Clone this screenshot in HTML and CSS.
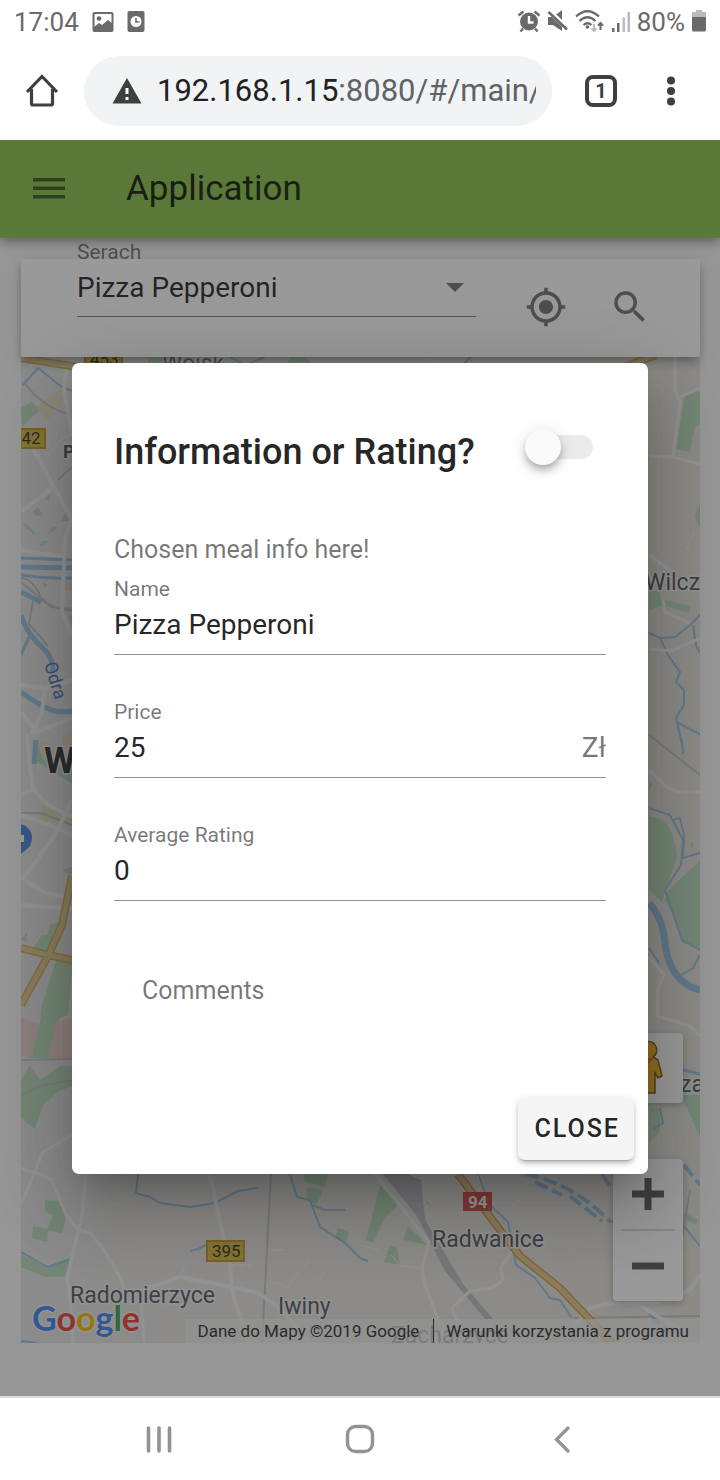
FILE: index.html
```html
<!DOCTYPE html>
<html lang="en">
<head>
<meta charset="utf-8">
<meta name="viewport" content="width=device-width, initial-scale=1">
<title>Application</title>
<link rel="stylesheet" href="styles.css">
</head>
<body>
<header class="status">
  <div class="status-group status-left">
    <span>17:04</span>
    <svg width="22" height="22" viewBox="0 0 22 22"><rect x="1.500" y="2" width="19" height="18" rx="1" fill="none" stroke="currentColor" stroke-width="2"/><circle cx="7" cy="7.500" r="2.300" fill="currentColor"/><path fill="currentColor" d="M2 16l5-4 3 2 6-5 5 4v7H2z"/></svg>
    <svg width="18" height="22" viewBox="0 0 18 22"><rect x=".5" y="0" width="17" height="21" rx="2" fill="currentColor"/><circle cx="9" cy="10.500" r="5.500" fill="#fff"/><path d="M9 7v4h3.500" fill="none" stroke="currentColor" stroke-width="1.600"/></svg>
  </div>
  <div class="status-group">
    <svg width="24" height="24" viewBox="0 0 24 24"><g fill="none" stroke="currentColor" stroke-width="2.400"><path d="M1.500 5.500l5-4M17.500 1.500l5 4M6 18.500l-2.500 3M18 18.500l2.500 3"/></g><circle cx="12" cy="11.500" r="9" fill="currentColor"/><path d="M12 6v6.500h4.500" fill="none" stroke="#fff" stroke-width="2.400"/></svg>
    <svg width="22" height="24" viewBox="0 0 22 24"><path fill="currentColor" d="M1 7h5l9-7v21L6 15H1z"/><path d="M1 0l20 19" stroke="#fff" stroke-width="5"/><path d="M1.500 2l18.500 17.500" stroke="currentColor" stroke-width="2.600"/></svg>
    <svg width="30" height="24" viewBox="0 0 30 24"><g fill="none" stroke="currentColor" stroke-width="2.300"><path d="M1 6.500q11.500-10.500 23 0M4.500 11q8-7.500 16 0M8.500 15q4-3.500 8 0"/></g><circle cx="12.500" cy="17" r="1.800" fill="currentColor"/><path d="M19 14v7m-2.500-2.500l2.500 2.500 2.500-2.500" fill="none" stroke="#bbb" stroke-width="2"/><path d="M25.500 20v-7m-2.500 2.500l2.500-2.500 2.500 2.500" fill="none" stroke="currentColor" stroke-width="2"/></svg>
    <svg width="20" height="24" viewBox="0 0 20 24"><g fill="currentColor"><path d="M1 18h2.500v4H1zM6 13h2.500v9H6z"/><path fill="#bbb" d="M11.500 7.500H14V22h-2.500zM16.500 2H19v20h-2.500z"/></g></svg>
    <span>80%</span>
    <svg width="16" height="24" viewBox="0 0 16 24"><path fill="#bbb" d="M5 0h6v2h4v6H1V2h4z"/><path fill="currentColor" d="M1 7h14v13q0 1.500-1.500 1.500h-11Q1 21.500 1 20z"/></svg>
  </div>
</header>

<div class="browser">
  <button class="bare home" aria-label="Home"><svg width="34" height="34" viewBox="0 0 34 34"><path d="M2 18L17 2.500 32 18M6.500 15v14.500q0 1.500 1.500 1.500h18q1.500 0 1.500-1.500V15" fill="none" stroke="#3c4043" stroke-width="3.200"/></svg></button>
  <div class="omnibox">
    <svg width="30" height="28" viewBox="0 0 30 28"><path fill="#3c4043" d="M15 1l14.500 25.500H.5z"/><path fill="#fff" d="M13.500 11h3v6h-3zM13.500 20h3v3h-3z"/></svg>
    <span class="url"><b>192.168.1.15</b>:8080/#/main/</span>
  </div>
  <button class="bare tabs" aria-label="Open tabs"><span class="tab-count">1</span></button>
  <button class="bare more" aria-label="More options"><svg width="10" height="32" viewBox="0 0 10 32"><g fill="#3c4043"><circle cx="5" cy="5.500" r="4"/><circle cx="5" cy="16" r="4"/><circle cx="5" cy="26.500" r="4"/></g></svg></button>
</div>

<div class="page">
  <header class="toolbar">
    <button class="bare menu" aria-label="Menu"><svg width="32" height="22" viewBox="0 0 32 22"><path fill="currentColor" d="M0 0h32v3.500H0zM0 8.500h32V12H0zM0 17h32v3.500H0z"/></svg></button>
    <h1 class="app-title">Application</h1>
  </header>

  <main class="content">
    <form class="search-card">
      <div class="search-field">
        <label class="label" for="meal">Serach</label>
        <select class="select" id="meal"><option>Pizza Pepperoni</option></select>
        <svg class="caret" width="18" height="9" viewBox="0 0 18 9"><path fill="currentColor" d="M0 0h18L9 9z"/></svg>
      </div>
      <button type="button" class="bare tool" aria-label="My location"><svg width="42" height="42" viewBox="0 0 24 24"><path fill="currentColor" d="M12 8c-2.210 0-4 1.790-4 4s1.790 4 4 4 4-1.790 4-4-1.790-4-4-4zm8.940 3A8.994 8.994 0 0 0 13 3.060V1h-2v2.060A8.994 8.994 0 0 0 3.060 11H1v2h2.060A8.994 8.994 0 0 0 11 20.940V23h2v-2.060A8.994 8.994 0 0 0 20.940 13H23v-2h-2.060zM12 19c-3.870 0-7-3.130-7-7s3.130-7 7-7 7 3.130 7 7-3.130 7-7 7z"/></svg></button>
      <button type="button" class="bare tool" aria-label="Search"><svg width="42" height="42" viewBox="0 0 24 24"><path fill="currentColor" d="M15.500 14h-.79l-.28-.27A6.471 6.471 0 0 0 16 9.500 6.500 6.500 0 1 0 9.500 16c1.610 0 3.090-.59 4.230-1.570l.27.28v.79l5 4.990L20.490 19l-4.990-5zm-6 0C7.010 14 5 11.990 5 9.500S7.010 5 9.500 5 14 7.010 14 9.500 11.990 14 9.500 14z"/></svg></button>
    </form>

    <section class="map" aria-label="Map">
      <svg class="map-art" viewBox="21 357 679 986" preserveAspectRatio="xMidYMid slice">
        <defs><linearGradient id="land"><stop offset="0" stop-color="#e6e6e6"/><stop offset=".35" stop-color="#e8e6e1"/><stop offset="1" stop-color="#e8e4dd"/></linearGradient></defs>
        <rect x="21" y="357" width="679" height="986" fill="url(#land)"/>
        <g fill="#b9dcbc">
          <path d="M21 408l11-6 8 8-18 17zM33 511l5-4 4 8-6 1zM24 522l12 11-2 2-11-10zM44 500l6-6 0 6zM48 534l5-8 5 2zM60 522l6-10 6 4-3 5zM38 548l6-8 4 2zM42 582l6 3-4 3zM68 615l4 1v10z"/>
          <path d="M33 740l17 4 22 26v14l-38-24zM62 870l10-3v8zM21 940l6-8 0 9zM32 950l10-15 5 0 3-10 16-5-6 22-12 8zM56 960l16-2v12l-4 45-8 3-10 40H30l10-35 2-18zM21 1080l9-15 10 15 20-14 12 0v20l-14 6-15 13-8 24-14-11z"/>
          <path d="M45 1200l14 1 7 16-4 16-14-2-1 11-15-4 1-12 14 3 6-14-8-3zM21 1254l27 14 22-9-5 18H45l-24-10zM303 1174h25l-3 13-20-5zM307 1187l16 3-7 15-10-5zM338 1228l11 4-3 11-11-5zM148 357h20l-5 8h-15zM290 357h15l10 9h-30z"/>
          <path d="M380 1185l18 20-13 13-12 25-7-3zM408 1226l19 19-24-5zM390 1245l7 3 3 17-16-3zM426 1200l6 6-6-2zM700 392l-7-2-9 8-8 51 14 3 5-26 5-2zM700 503l-5 12 3 10 2 2zM649 590l11 2 2 14-13 4zM665 600l26 6-2 7-24-7zM649 817q24-2 28 40l-15 45-13-12zM700 861l-32 29-3 10 10 20 7 22 18 8zM681 1095h19v42zM649 1108h11v23l-11 12zM684 1212l14 8-2 5-13-7zM649 780l4 4-4 5zM690 845l3-4v8z"/>
        </g>
        <g fill="#e8dfc4"><path d="M36 407l26-19v14l-14 19zM44 804l28 13v8l-34-4zM36 740l16 4 20 12v16l-30-14zM60 738l12-8v26z"/></g>
        <g fill="#ebcfcc"><path d="M21 1017l19 7-8 34-11-3zM56 1022l16-4v40H48zM63 582h9v8h-9z"/></g>
        <path fill="#bdc1c8" d="M383 1174h24l14 6 4 40 38 64 30 35h-8l-40-48-28-55z"/>
        <g fill="none" stroke="#c3c4c8" stroke-width="2">
          <path d="M25 384q20 25 45 30M58 480l14-13M21 578q12 0 20 20 10 10 31 13M21 582l30 25 21 2M33 600l-4 24 19 22M21 813h20l31 12M21 1060l51-1M21 1096l19-10 32-6M271 1174l-9 169M649 735l51 40M690 1190l-15 90M574 1318l126-2"/>
        </g>
        <g fill="none" stroke="#98c4e4" stroke-linejoin="round">
          <path stroke-width="2" d="M23 385l15-17 24 19 10 4M21 1252l27 15 22-8M138 1174l-2 19 14 4 10 6 30 4 25-4 23-12 20-3M190 1251l8-2 8-4M290 1174l7 23 13 3 10 27 25 16 15 15M312 1205l13 5h20M230 357l15 8 20-8M470 357l-8 9M21 1341l16 2"/>
          <path stroke-width="2" d="M478 1174l12 31 18 17 8 43 19 13 15 20 10 2 12 18M608 1222l12-2M683 1225l17 21M649 633l11 5 15-1 15-12 10-10M660 638l8 17 12 17-4 10 8 8v15l-8 13 4 17 3 15M676 722l24 12M693 625l3 20 4 8M682 740l1 14M649 808l21 7 13 25-2 25-16 25 7 20 10 30 18 10M673 820l7-2 4 17-1 23 17-5M681 975l12-7 7-13M649 948l10 15M660 1108l3 15-10 6M360 1258l8 3"/>
          <path stroke-width="3" d="M21 558l51 2M21 575q25 4 51 3M21 655l8-18M683 1070l17 4"/>
          <path stroke-width="5" d="M21 567l51 1M21 592l20 10M21 615q6 20 24 35 8 8 8 22M21 692q16 12 30 18 10 3 21 1M36 740l-2 24"/>
          <path stroke-width="7" d="M649 903q14 15 16 40 5 40 35 47"/>
          <path stroke-width="4" stroke-dasharray="14 5" d="M525 1174q50 10 85 48M535 1182l27 13M570 1196l32 25M602 1174l8 12M650 1313l18 20M684 1165l16 20"/>
        </g>
        <g fill="none" stroke="#f3f3f3" stroke-linejoin="round" stroke-width="4">
          <path d="M67 366l-3 24 8 45M34 450l20 37 18 33M21 512l33-25M72 518l-7 22-3 72 10 24M21 550l17 3 24 3M21 685l24 3 27-8M45 688l-3 24-10 22M21 712l16 20 35-14M27 735l3 35 4 20-13 4M34 790l14 15 24 12M21 815l29 10 22 10M72 800l-17 35-33 45M25 880l20 13 22 4M21 905l51 4"/>
          <path stroke-width="3" d="M72 1135l-29 17-22 53M21 1168l15 5 15 6 15 36 13 15 11 3 13 15 17 29 4 13M86 1174l-4 41-15 63 3 22 3 43M141 1295l3 48"/>
          <path d="M210 1174l8 39 12 52 2 22 4 18 14 38M143 1290l37-13 52 10 26 6 22 15 30 35"/>
          <path stroke-width="3" d="M375 1174l54 68-7 26 3 17 15 40M512 1250l-11 18 2 12-11 8-22 3-18 17 6 17M675 357v33l5 13-7 53M649 456l23 1 28 7M680 397l20-9M649 649l23 2 28-13M649 555l21 15M663 600l2 12 25 11M649 770l19 18 10 4h22M649 957l15 18-6 15-1 26 33 10 10 10"/>
          <path d="M574 1326l16-18 15-4 55-2 30-12 10-15M640 1305l20 13 20 10"/>
          <path stroke-width="1" d="M48 455l15-17 9-3M232 1265h20M242 1265v5M180 1277l5-12M268 1250h16M274 1282l14 5 10-15M304 1267l5-8M319 1280l6-10M360 1245l20 5M391 1255l10 11 20 2M420 357l30 9M480 1174l-10 20 15 0M520 1200l-20 15M686 550l8-18M200 357l40 9M543 357l10 9"/>
        </g>
        <g fill="none" stroke-linejoin="round">
          <path stroke="#d3a050" stroke-width="8" d="M458 1174l42 56 20 26 40 32 52 55"/>
          <path stroke="#e6cc8c" stroke-width="5" d="M458 1174l42 56 20 26 40 32 52 55"/>
          <path stroke="#d3ae60" stroke-width="8" d="M21 358l50 8 14 2M72 876l-10 49-14 31-27 49M21 948l27 7 24 5M622 368l34-13"/>
          <path stroke="#e0cd8e" stroke-width="5" d="M21 358l50 8 14 2M72 876l-10 49-14 31-27 49M21 948l27 7 24 5M622 368l34-13"/>
        </g>
        <circle cx="18" cy="838" r="14" fill="#4a87e0"/><path fill="#4a87e0" d="M21 854l10-9H18z"/><path fill="#fff" d="M18 838h3v-3h3v7h-6z"/>
        <g class="shield">
          <rect x="15" y="429" width="30" height="19"/><rect x="85" y="347" width="37" height="20"/><rect x="207" y="1241" width="37" height="20"/>
        </g>
        <rect x="463" y="1192" width="29" height="19" fill="#d64e4b"/>
        <g class="shield-text"><text x="12" y="444">342</text><text x="90" y="365">453</text><text x="212" y="1257">395</text><text class="red" x="468" y="1208">94</text></g>
        <g class="place">
          <text x="70" y="1303">Radomierzyce</text><text x="278" y="1314">Iwiny</text><text x="432" y="1247">Radwanice</text>
          <text x="645" y="590">Wilczy</text><text x="680" y="1092">za</text><text x="391" y="1343">Zacharzyce</text><text class="muted" x="162" y="371">Wojsk</text>
          <text class="district" x="63" y="458">P</text><text class="city" x="44" y="773">Wrocław</text>
          <text class="river" transform="translate(44 664) rotate(73)">Odra</text>
        </g>
      </svg>
      <button class="map-button pegman" aria-label="Street View"><svg width="30" height="56" viewBox="0 0 30 56"><path fill="#eeb01f" stroke="#80601c" stroke-width="1.500" d="M15 1.500a8.500 8.500 0 0 1 5 15.500l5 3 4 16-4 2-3-5v20H8V33l-3 5-4-2 4-16 5-3a8.500 8.500 0 0 1 5-15.500z"/><path fill="#d17920" d="M9 18h12l-6 6z"/></svg></button>
      <div class="zoom">
        <button aria-label="Zoom in"><svg width="32" height="32" viewBox="0 0 32 32"><path fill="currentColor" d="M12.500 0h7v12.500H32v7H19.500V32h-7V19.500H0v-7h12.500z"/></svg></button>
        <button aria-label="Zoom out"><svg width="32" height="32" viewBox="0 0 32 32"><path fill="currentColor" d="M0 12.500h32v7H0z"/></svg></button>
      </div>
      <a class="google" href="#google" aria-label="Google"><span class="blue">G</span><span class="red">o</span><span class="yellow">o</span><span class="blue">g</span><span class="green">l</span><span class="red">e</span></a>
      <div class="credits"><span>Dane do Mapy ©2019 Google</span><a href="#terms">Warunki korzystania z programu</a></div>
    </section>
  </main>

  <div class="scrim">
    <section class="dialog" role="dialog" aria-labelledby="dialog-title">
      <div class="dialog-head">
        <h2 class="dialog-title" id="dialog-title">Information or Rating?</h2>
        <input class="switch" type="checkbox" role="switch" aria-labelledby="dialog-title">
      </div>
      <p class="hint">Chosen meal info here!</p>
      <div class="fields">
        <div class="field"><label class="label" for="name">Name</label><div class="field-row"><input id="name" value="Pizza Pepperoni" readonly></div></div>
        <div class="field"><label class="label" for="price">Price</label><div class="field-row"><input id="price" value="25" readonly><span class="suffix">Zł</span></div></div>
        <div class="field"><label class="label" for="rating">Average Rating</label><div class="field-row"><input id="rating" value="0" readonly></div></div>
      </div>
      <p class="hint comments">Comments</p>
      <div class="actions"><button class="close">CLOSE</button></div>
    </section>
  </div>
</div>

<nav class="system-nav" aria-label="System">
  <button class="bare" aria-label="Recent apps"><svg width="30" height="30" viewBox="0 0 30 30"><path d="M4.500 4v23M15 4v23M25.500 4v23" stroke="#939393" stroke-width="3.600" stroke-linecap="round"/></svg></button>
  <button class="bare" aria-label="Home screen"><svg width="30" height="30" viewBox="0 0 30 30"><rect x="2.500" y="2.500" width="25" height="25" rx="8" fill="none" stroke="#939393" stroke-width="3.400"/></svg></button>
  <button class="bare" aria-label="Back"><svg width="30" height="30" viewBox="0 0 30 30"><path d="M22 4L10.500 15.500 22 27" fill="none" stroke="#939393" stroke-width="3.200" stroke-linecap="round"/></svg></button>
</nav>
</body>
</html>
```
FILE: styles.css
```css
* { box-sizing: border-box; }

body {
  margin: 0;
  min-height: 100vh;
  display: flex;
  flex-direction: column;
  background: #fff;
  color: rgba(0, 0, 0, .87);
  font-family: Roboto, "Noto Sans", sans-serif;
}

svg { display: block; flex: none; }
h1, h2, p { margin: 0; }
button, input, select { font: inherit; color: inherit; }

.bare {
  display: flex;
  align-items: center;
  justify-content: center;
  padding: 0;
  border: 0;
  background: none;
}

.status {
  display: flex;
  align-items: center;
  justify-content: space-between;
  height: 44px;
  padding: 0 13px 0 14px;
  color: #6a6a6a;
  font-size: 26px;
}
.status-group { display: flex; align-items: center; gap: 6px; }
.status-left { gap: 13px; }

.browser { display: flex; align-items: center; height: 96px; padding: 0 28px 2px 0; }
.home { width: 84px; height: 70px; }
.omnibox {
  flex: 1;
  min-width: 0;
  display: flex;
  align-items: center;
  gap: 15px;
  height: 70px;
  padding: 0 16px 0 28px;
  border-radius: 35px;
  background: #f1f3f4;
}
.url {
  flex: 1;
  overflow: hidden;
  white-space: nowrap;
  color: #5f6368;
  font-size: 31px;
  line-height: 44px;
}
.url b { font-weight: 400; color: #202124; }
.tabs { width: 98px; height: 70px; }
.tab-count {
  width: 32px;
  height: 32px;
  border: 4px solid #3c4043;
  border-radius: 8px;
  color: #3c4043;
  font-size: 20px;
  font-weight: 700;
  line-height: 24px;
}
.more { width: 42px; height: 70px; }

.page {
  flex: 1;
  position: relative;
  display: flex;
  flex-direction: column;
  overflow: hidden;
  background: #fafafa;
}
.toolbar {
  z-index: 1;
  display: flex;
  align-items: center;
  height: 98px;
  background: #8bc34a;
  box-shadow: 0 4px 7px -2px rgba(0, 0, 0, .2), 0 7px 9px rgba(0, 0, 0, .14), 0 2px 18px rgba(0, 0, 0, .12);
}
.menu { width: 98px; height: 84px; color: rgba(0, 0, 0, .54); }
.app-title { margin-left: 28px; font-size: 35px; font-weight: 400; line-height: 52px; }

.content { flex: 1; display: flex; flex-direction: column; padding: 21px 20px 53px 21px; }
.search-card {
  z-index: 1;
  display: flex;
  align-items: center;
  height: 98px;
  padding: 0 28px 2px 56px;
  background: #fff;
  box-shadow: 0 4px 7px -2px rgba(0, 0, 0, .2), 0 7px 9px rgba(0, 0, 0, .14), 0 2px 18px rgba(0, 0, 0, .12);
}
.search-field {
  flex: 1;
  align-self: flex-start;
  position: relative;
  z-index: 2;
  display: flex;
  flex-direction: column;
  margin: -21px 28px 0 0;
}
.label { color: rgba(0, 0, 0, .54); font-size: 21px; line-height: 28px; }
.select {
  width: 100%;
  height: 51px;
  padding: 0 0 7px;
  border: 0;
  border-bottom: 1px solid rgba(0, 0, 0, .5);
  background: none;
  appearance: none;
  font-size: 28px;
}
.caret { position: absolute; right: 12px; bottom: 25px; color: rgba(0, 0, 0, .54); pointer-events: none; }
.tool { width: 84px; height: 84px; color: rgba(0, 0, 0, .54); }

.map { flex: 1; position: relative; overflow: hidden; background: #e8e6e1; }
.map-art { position: absolute; inset: 0; width: 100%; height: 100%; }
.shield { fill: #dcbc40; stroke: #c39a2c; stroke-width: 2; }
.shield-text { font-size: 17px; fill: #333; }
.shield-text .red { fill: #fff; font-weight: 700; }
.place { font-size: 23px; fill: #555a62; stroke: #f2f2f2; stroke-width: 3; paint-order: stroke; }
.place .muted { font-size: 23px; fill: #747b86; }
.place .district { font-size: 18px; font-weight: 700; }
.place .city { font-size: 36px; font-weight: 700; fill: #33363b; }
.place .river { font-size: 18px; fill: #4a78b8; stroke: none; }

.map-button, .zoom {
  position: absolute;
  right: 17px;
  width: 70px;
  border: 0;
  border-radius: 4px;
  background: #fff;
  box-shadow: 0 2px 7px rgba(0, 0, 0, .3);
}
.pegman { bottom: 240px; display: flex; align-items: center; justify-content: center; height: 70px; padding: 0; }
.zoom { bottom: 42px; display: flex; flex-direction: column; padding: 0 8px; }
.zoom button {
  display: flex;
  align-items: center;
  justify-content: center;
  height: 70px;
  padding: 0;
  border: 0;
  background: none;
  color: #5c5c5c;
}
.zoom button + button { height: 72px; border-top: 2px solid #dadada; }

.google {
  position: absolute;
  left: 11px;
  bottom: 3px;
  font-family: Lato, sans-serif;
  font-size: 34px;
  font-weight: 700;
  line-height: 44px;
  text-decoration: none;
  text-shadow: 0 0 3px #fff, 0 0 3px #fff;
}
.google .blue { color: #4285f4; }
.google .red { color: #ea4335; }
.google .yellow { color: #fbbc05; }
.google .green { color: #34a853; }

.credits {
  position: absolute;
  right: 0;
  bottom: 0;
  display: flex;
  padding: 0 11px 0 13px;
  background: rgba(245, 245, 245, .7);
  color: #333;
  font-size: 17px;
  line-height: 24px;
  white-space: nowrap;
}
.credits a { margin-left: 14px; padding-left: 12px; border-left: 1px solid #333; color: inherit; text-decoration: none; }

.scrim {
  position: absolute;
  inset: 0;
  z-index: 5;
  display: flex;
  align-items: center;
  justify-content: center;
  background: rgba(33, 33, 33, .46);
}
.dialog {
  width: 80%;
  padding: 61px 42px 14px;
  border-radius: 7px;
  background: #fff;
  box-shadow: 0 19px 26px -12px rgba(0, 0, 0, .2), 0 42px 66px 5px rgba(0, 0, 0, .14), 0 16px 80px 14px rgba(0, 0, 0, .12);
}
.dialog-head { display: flex; align-items: center; justify-content: space-between; height: 56px; }
.dialog-title { font-size: 36px; font-weight: 500; line-height: 56px; white-space: nowrap; }
.switch {
  appearance: none;
  position: relative;
  width: 60px;
  height: 24px;
  margin: 0 13px 10px 0;
  border-radius: 12px;
  background: #ebebeb;
}
.switch::before {
  content: "";
  position: absolute;
  left: -8px;
  top: -6px;
  width: 36px;
  height: 36px;
  border-radius: 50%;
  background: #fafafa;
  box-shadow: 0 4px 7px -2px rgba(0, 0, 0, .2), 0 7px 9px rgba(0, 0, 0, .14), 0 2px 18px rgba(0, 0, 0, .12);
}
.hint { margin-top: 51px; color: rgba(0, 0, 0, .54); font-size: 25px; line-height: 38px; }
.fields { display: flex; flex-direction: column; gap: 43px; margin-top: 6px; }
.field { display: flex; flex-direction: column; }
.field-row { display: flex; align-items: center; padding-bottom: 7px; border-bottom: 1px solid #949494; font-size: 28px; line-height: 44px; }
.field-row input { flex: 1; min-width: 0; height: 44px; padding: 0; border: 0; background: none; outline: 0; }
.suffix { color: rgba(0, 0, 0, .54); }
.comments { margin-top: 71px; padding-left: 28px; }
.actions { display: flex; justify-content: flex-end; margin: 87px -28px 0 0; }
.close {
  height: 63px;
  padding: 0 14px 0 16px;
  border: 0;
  border-radius: 7px;
  background: #f5f5f5;
  box-shadow: 0 5px 2px -4px rgba(0, 0, 0, .2), 0 4px 4px rgba(0, 0, 0, .14), 0 2px 9px rgba(0, 0, 0, .12);
  font-size: 25px;
  font-weight: 500;
  letter-spacing: 2px;
}

.system-nav {
  display: grid;
  grid-template-columns: repeat(3, 1fr);
  height: 84px;
  padding: 0 59px;
  border-top: 2px solid #ddd;
}
```
